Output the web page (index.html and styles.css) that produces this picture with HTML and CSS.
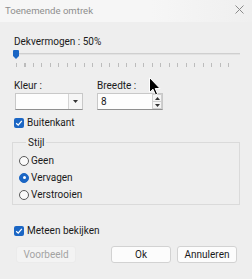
FILE: index.html
```html
<!DOCTYPE html>
<html lang="nl">
<head>
  <meta charset="UTF-8">
  <title>Toenemende omtrek</title>
  <link rel="stylesheet" href="styles.css">
</head>
<body>
  <div class="window">
    <div class="titlebar">
      <span class="title">Toenemende omtrek</span>
      <svg class="close" width="9" height="9" viewBox="0 0 9 9"><path d="M0.5 0.5L8.5 8.5M8.5 0.5L0.5 8.5" stroke="#8a8a8a" stroke-width="1"/></svg>
    </div>
    <div class="content">
      <div class="label opacity-label">Dekvermogen : 50%</div>
      <div class="slider">
        <div class="track"></div>
        <svg class="thumb" width="6" height="9" viewBox="0 0 6 9"><path d="M0 1Q0 0 1 0H5Q6 0 6 1V6L3 9L0 6Z" fill="#1b66c4"/></svg>
      </div>
      <div class="ticks"></div>

      <div class="fields">
        <div class="field">
          <div class="label">Kleur :</div>
          <div class="combo">
            <div class="combo-value"></div>
            <div class="combo-btn">
              <svg width="5" height="3" viewBox="0 0 5 3"><path d="M0 0H5L2.5 3Z" fill="#333"/></svg>
            </div>
          </div>
        </div>
        <div class="field">
          <div class="label">Breedte :</div>
          <div class="spin">
            <div class="spin-value">8</div>
            <div class="spin-btns">
              <div class="spin-btn"><svg width="5" height="3" viewBox="0 0 5 3"><path d="M0 3H5L2.5 0Z" fill="#333"/></svg></div>
              <div class="spin-btn"><svg width="5" height="3" viewBox="0 0 5 3"><path d="M0 0H5L2.5 3Z" fill="#333"/></svg></div>
            </div>
          </div>
        </div>
      </div>

      <div class="check-row first">
        <span class="check"><svg width="8" height="8" viewBox="0 0 8 8"><path d="M1.2 4.2L3.2 6.1L6.8 1.9" fill="none" stroke="#fff" stroke-width="1.3"/></svg></span>
        <span>Buitenkant</span>
      </div>

      <fieldset class="group">
        <legend>Stijl</legend>
        <div class="radio-row"><span class="radio"></span>Geen</div>
        <div class="radio-row"><span class="radio on"></span>Vervagen</div>
        <div class="radio-row"><span class="radio"></span>Verstrooien</div>
      </fieldset>

      <div class="check-row second">
        <span class="check"><svg width="8" height="8" viewBox="0 0 8 8"><path d="M1.2 4.2L3.2 6.1L6.8 1.9" fill="none" stroke="#fff" stroke-width="1.3"/></svg></span>
        <span>Meteen bekijken</span>
      </div>

      <div class="buttons">
        <button class="btn disabled">Voorbeeld</button>
        <span class="spacer"></span>
        <button class="btn">Ok</button>
        <button class="btn">Annuleren</button>
      </div>
    </div>

    <svg class="cursor" width="12" height="19" viewBox="0 0 12 19"><path d="M0.5 0.5V15.5L4 12.2L6.5 18L8.6 17.1L6.2 11.5H11Z" fill="#000" stroke="#fff" stroke-width="1"/></svg>
  </div>
</body>
</html>
```

FILE: styles.css
```css
body { margin: 0; font-family: Roboto, "Noto Sans", sans-serif; font-size: 10px; color: #1a1a1a; }
.window {
  width: 252px;
  height: 279px;
  background: #eeeeee;
  position: relative;
  overflow: hidden;
}
.titlebar {
  height: 22px;
  display: flex;
  align-items: center;
  justify-content: space-between;
  padding: 0 8px 0 5px;
  background: linear-gradient(to right, #f6f6f6 60%, #efefef);
}
.title { color: #8e8e8e; font-size: 9.6px; line-height: 13px; margin-top: -2px; }
.close { margin-top: -3px; }
.content { padding: 0 15px 0 14px; }
.label { line-height: 13px; }
.opacity-label { margin-top: 13px; }

.slider { position: relative; height: 12px; margin-right: -3px; }
.track {
  position: absolute;
  left: 0; right: 0; top: 5px;
  height: 1px;
  background: #cfcfcf;
  border-bottom: 1px solid #e2e2e2;
}
.thumb { position: absolute; left: -1px; top: 2px; }
.ticks {
  margin: 3px 0 0 2px;
  height: 4px;
  background: repeating-linear-gradient(to right, #bcbcbc 0 1px, transparent 1px 8.5px);
}

.fields { display: flex; gap: 14px; margin-top: 12px; }
.combo, .spin {
  display: flex;
  height: 17px;
  margin-top: 1px;
  border: 1px solid #c8c8c8;
  border-bottom-color: #8f8f8f;
  background: #fdfdfd;
  box-sizing: border-box;
}
.combo { width: 68px; margin-left: 1px; }
.combo-value { flex: 1; }
.combo-btn {
  width: 13px;
  border-left: 1px solid #d4d4d4;
  background: #f6f6f6;
  display: flex;
  align-items: center;
  justify-content: center;
}
.spin { width: 66px; }
.spin-value { flex: 1; padding-left: 3px; line-height: 15px; }
.spin-btns { width: 10px; display: flex; flex-direction: column; }
.spin-btn {
  height: 8px;
  box-sizing: border-box;
  border: 1px solid #cfcfcf;
  background: #f4f4f4;
  display: flex;
  align-items: center;
  justify-content: center;
}
.spin-btn + .spin-btn { height: 7px; border-top: 0; }

.check-row { display: flex; align-items: center; gap: 3px; height: 13px; line-height: 13px; }
.check-row.first { margin-top: 6px; }
.check-row.second { margin-top: 19px; }
.check {
  width: 10px; height: 10px;
  border-radius: 2px;
  background: #1b66c4;
  display: flex;
  align-items: center;
  justify-content: center;
}

.group {
  margin: 7px -3px 0 -2px;
  padding: 3px 0 1px 6px;
  border: 1px solid #dadada;
}
.group legend { padding: 0 2px; margin-left: 7px; line-height: 13px; }
.radio-row { display: flex; align-items: center; gap: 2px; height: 17px; }
.radio {
  width: 8px; height: 8px;
  border: 1px solid #5a5a5a;
  border-radius: 50%;
  background: #fafafa;
  position: relative;
}
.radio.on { background: #1b66c4; border-color: #1b66c4; }
.radio.on::after {
  content: "";
  position: absolute;
  left: 2.5px; top: 2.5px;
  width: 3px; height: 3px;
  border-radius: 50%;
  background: #fff;
}

.buttons { display: flex; gap: 6px; margin-top: 9px; margin-left: 2px; }
.spacer { flex: 1; }
.btn {
  font: inherit;
  height: 17px;
  padding: 0;
  width: 60px;
  border: 1px solid #d2d2d2;
  border-radius: 3px;
  background: #fcfcfc;
  color: #1a1a1a;
}
.btn.disabled { background: #f3f3f3; border-color: #ebebeb; color: #a3a3a3; }

.cursor { position: absolute; left: 149px; top: 77px; }
```
